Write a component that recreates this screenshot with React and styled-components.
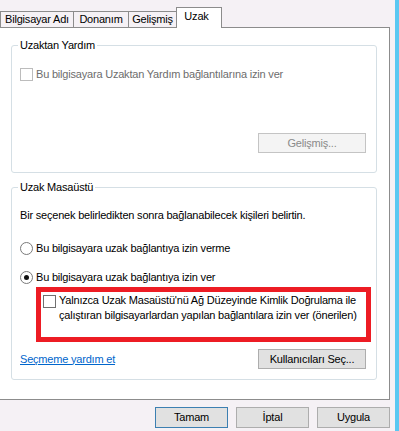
import React from "react";
import styled, { createGlobalStyle, css } from "styled-components";

const GlobalStyle = createGlobalStyle`
  html, body {
    margin: 0;
    padding: 0;
    background: #f5f1f5;
  }
  body {
    font-family: "Liberation Sans", Arial, sans-serif;
    font-size: 11px;
    letter-spacing: -0.2px;
    color: #000;
  }
  #root {
    width: 399px;
    height: 431px;
  }
  * { box-sizing: border-box; }
`;

const Window = styled.div`
  display: flex;
  justify-content: space-between;
  width: 399px;
  height: 431px;
  overflow: hidden;
`;

const Dialog = styled.div`
  width: 390px;
  display: flex;
  flex-direction: column;
`;

const Stripe = styled.div`
  width: 4px;
  height: 100%;
  background: #5ac8f2;
`;

const TabBar = styled.div`
  height: 27px;
  display: flex;
  align-items: flex-end;
`;

const Tab = styled.div`
  width: ${(p) => p.$w}px;
  height: 16px;
  border-top: 1px solid #8c8c8c;
  border-left: 1px solid #8c8c8c;
  line-height: 15px;
  text-align: center;
  background: #f5f1f5;
  white-space: nowrap;
  ${(p) =>
    p.$active &&
    css`
      position: relative;
      z-index: 1;
      height: 21px;
      margin-bottom: -1px;
      border-right: 1px solid #8c8c8c;
      background: #fff;
      line-height: 15px;
      padding-top: 1px;
      text-indent: -5px;
    `}
`;

const Panel = styled.div`
  height: 373px;
  background: #fff;
  border: 1px solid #8c8c8c;
  border-left: none;
  padding: 17px 12px 0 11px;
  display: flex;
  flex-direction: column;
  gap: 14px;
`;

const Group = styled.div`
  position: relative;
  height: ${(p) => p.$h}px;
  border: 1px solid #d5dfe5;
  border-radius: 3px;
  display: flex;
  flex-direction: column;
  padding: ${(p) => p.$pad};
`;

const Legend = styled.span`
  position: absolute;
  top: -8px;
  left: 6px;
  padding: 0 2px;
  line-height: 15px;
  background: #fff;
`;

const Row = styled.div`
  display: flex;
  align-items: center;
  line-height: 15px;
  min-height: 15px;
  margin-top: ${(p) => p.$mt || 0}px;
  color: ${(p) => (p.$disabled ? "#6d6d6d" : "#000")};
`;

const Text = styled.span`
  line-height: 15px;
`;

const Check = styled.span`
  flex: none;
  width: 13px;
  height: 13px;
  margin-right: 3px;
  margin-top: ${(p) => p.$mt || 0}px;
  background: #fff;
  border: 1px solid ${(p) => (p.$disabled ? "#bcbcbc" : "#707070")};
`;

const Radio = styled.span`
  flex: none;
  position: relative;
  width: 13px;
  height: 13px;
  margin-right: 3px;
  border-radius: 50%;
  background: #fff;
  border: 1px solid #7a7a7a;
  ${(p) =>
    p.$checked &&
    css`
      &::after {
        content: "";
        position: absolute;
        left: 3px;
        top: 3px;
        width: 5px;
        height: 5px;
        border-radius: 50%;
        background: #111;
      }
    `}
`;

const Spacer = styled.div`
  flex: 1;
`;

const Button = styled.button`
  font: inherit;
  letter-spacing: inherit;
  width: ${(p) => p.$w}px;
  height: ${(p) => p.$h}px;
  padding: 0;
  border: 1px solid ${(p) => (p.$default ? "#3c7fb1" : p.$disabled ? "#c4c4c4" : "#adadad")};
  background: ${(p) => (p.$disabled ? "#f4f4f4" : "#e1e1e1")};
  color: ${(p) => (p.$disabled ? "#8a8a8a" : "#000")};
  line-height: 15px;
  text-align: center;
  align-self: ${(p) => p.$align || "auto"};
  flex: none;
`;

const Highlight = styled.div`
  width: 335px;
  height: 55px;
  margin: 2px 0 0 16px;
  border: 5px solid #ed1c24;
  padding: 1px 0 0 2px;
  display: flex;
  align-items: flex-start;
`;

const BottomRow = styled.div`
  margin-top: 7px;
  display: flex;
  justify-content: space-between;
  align-items: center;
`;

const Link = styled.a`
  color: #0066cc;
  text-decoration: underline;
  line-height: 15px;
  cursor: pointer;
`;

const Footer = styled.div`
  margin-top: 7px;
  display: flex;
  justify-content: flex-end;
  gap: 8px;
`;

export default function App() {
  return (
    <>
      <GlobalStyle />
      <Window>
        <Dialog>
          <TabBar>
            <Tab $w={73}>Bilgisayar Adı</Tab>
            <Tab $w={55}>Donanım</Tab>
            <Tab $w={48}>Gelişmiş</Tab>
            <Tab $w={46} $active>Uzak</Tab>
          </TabBar>
          <Panel>
            <Group $h={128} $pad="21px 10px 19px 8px">
              <Legend>Uzaktan Yardım</Legend>
              <Row $disabled>
                <Check $disabled />
                <Text>Bu bilgisayara Uzaktan Yardım bağlantılarına izin ver</Text>
              </Row>
              <Spacer />
              <Button $w={108} $h={20} $disabled $align="flex-end">
                Gelişmiş...
              </Button>
            </Group>
            <Group $h={193} $pad="20px 10px 10px 8px">
              <Legend>Uzak Masaüstü</Legend>
              <Row>
                <Text>Bir seçenek belirledikten sonra bağlanabilecek kişileri belirtin.</Text>
              </Row>
              <Row $mt={18}>
                <Radio />
                <Text>Bu bilgisayara uzak bağlantıya izin verme</Text>
              </Row>
              <Row $mt={14}>
                <Radio $checked />
                <Text>Bu bilgisayara uzak bağlantıya izin ver</Text>
              </Row>
              <Highlight>
                <Check $mt={2} />
                <Text>
                  Yalnızca Uzak Masaüstü'nü Ağ Düzeyinde Kimlik Doğrulama ile
                  <br />
                  çalıştıran bilgisayarlardan yapılan bağlantılara izin ver (önerilen)
                </Text>
              </Highlight>
              <BottomRow>
                <Link>Seçmeme yardım et</Link>
                <Button $w={108} $h={20}>Kullanıcıları Seç...</Button>
              </BottomRow>
            </Group>
          </Panel>
          <Footer>
            <Button $w={73} $h={21} $default>Tamam</Button>
            <Button $w={73} $h={21}>İptal</Button>
            <Button $w={73} $h={21}>Uygula</Button>
          </Footer>
        </Dialog>
        <Stripe />
      </Window>
    </>
  );
}
